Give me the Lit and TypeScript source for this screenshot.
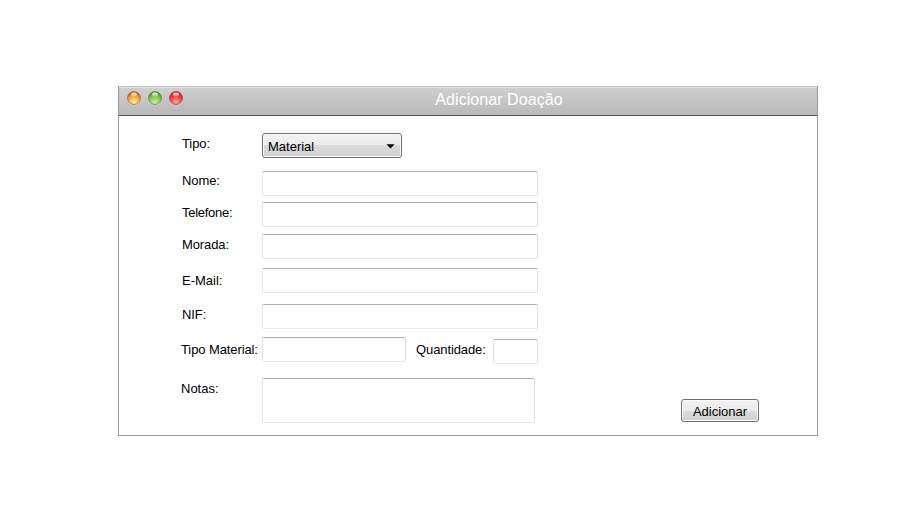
import { LitElement, html, css, svg } from "lit";
import { customElement, property } from "lit/decorators.js";

@customElement("window-light")
class WindowLight extends LitElement {
  @property() rim = "";
  @property() mid = "";
  @property() low = "";

  static styles = css`
    :host { display: block; width: 14px; height: 15px; }
    svg { display: block; }
  `;

  render() {
    return html`<svg width="14" height="15" viewBox="0 0 14 15">
      <defs>
        ${svg`<radialGradient id="body" cx="0.5" cy="0.82" r="0.8">
          <stop offset="0" stop-color=${this.low} />
          <stop offset="0.6" stop-color=${this.mid} />
          <stop offset="1" stop-color=${this.rim} />
        </radialGradient>
        <linearGradient id="shine" x1="0" y1="0" x2="0" y2="1">
          <stop offset="0" stop-color="#fff" stop-opacity="0.95" />
          <stop offset="1" stop-color="#fff" stop-opacity="0.25" />
        </linearGradient>`}
      </defs>
      <circle cx="7" cy="7.8" r="6.8" fill="#e4e4e4" opacity="0.7" />
      <circle cx="7" cy="7" r="6.5" fill="url(#body)" stroke=${this.rim} stroke-width="0.8" stroke-opacity="0.75" />
      <ellipse cx="7" cy="3.5" rx="3" ry="2" fill="url(#shine)" />
    </svg>`;
  }
}

@customElement("app-root")
class AppRoot extends LitElement {
  static styles = css`
    :host {
      display: block;
      box-sizing: border-box;
      height: 520px;
      padding: 86px 92px 84px 118px;
      background: #fff;
      color: #000;
      font: 13px/15px "Liberation Sans", Arial, sans-serif;
    }
    * { box-sizing: border-box; }
    .window {
      width: 700px;
      height: 350px;
      border: 1px solid #999;
      border-top: 0;
      display: flex;
      flex-direction: column;
    }
    .titlebar {
      height: 30px;
      flex: none;
      display: grid;
      grid-template-columns: 1fr auto 1fr;
      border-top: 1px solid #bcbcbc;
      border-bottom: 1px solid #505050;
      box-shadow: inset 0 1px #e2e2e2;
      background: linear-gradient(#d0d0d0, #b9b9b9);
    }
    .lights { display: flex; gap: 7px; padding: 4px 0 0 8px; }
    .title {
      color: #fff;
      font-size: 16px;
      line-height: 18px;
      letter-spacing: 0.06px;
      padding: 4px 0 0 62px;
      white-space: nowrap;
    }
    .content { flex: 1; display: flex; justify-content: space-between; }
    .form { padding: 17px 0 0 62px; }
    .row { display: flex; align-items: flex-start; height: 25px; }
    .label { width: 81px; flex: none; padding: 3px 0 0 1px; white-space: nowrap; letter-spacing: -0.1px; }
    .flush { padding-left: 0; }
    .nome { margin-top: 13px; }
    .nome .label { padding-top: 2px; }
    .telefone { margin-top: 6px; }
    .telefone .label { letter-spacing: -0.28px; }
    .morada { margin-top: 7px; }
    .email { margin-top: 9px; }
    .email .label { letter-spacing: 0; }
    .email .label, .material .label { padding-top: 5px; }
    .nif { margin-top: 11px; }
    .material { margin-top: 8px; }
    .notas { margin-top: 16px; height: 45px; }
    .notas .label { letter-spacing: 0; }
    input, textarea {
      display: block;
      margin: 0;
      padding: 2px 5px;
      height: 25px;
      border: 1px solid;
      border-color: #abadb3 #dbdfe6 #e3e9ef #e2e3ea;
      border-radius: 2px;
      background: #fff;
      outline: none;
      font: inherit;
      resize: none;
    }
    .wide { width: 276px; }
    .kind { width: 144px; }
    .amount { width: 45px; margin-top: 2px; }
    .notes { width: 273px; height: 45px; }
    .material .amount-label { width: 77px; margin-left: 10px; padding-left: 0; }
    .select, .button {
      display: flex;
      align-items: center;
      margin: 0;
      border: 1px solid #707070;
      border-radius: 3px;
      box-shadow: inset 0 0 0 1px #fafafa;
      background: linear-gradient(#f2f2f2, #ebebeb 50%, #dcdcdc 50%, #cfcfcf);
      color: #000;
      font: inherit;
    }
    .select { width: 140px; height: 25px; padding: 2px 6px 0 5px; justify-content: space-between; }
    .side { display: flex; align-items: flex-end; padding: 0 58px 13px 0; }
    .button { width: 78px; height: 23px; padding: 2px 0 0; justify-content: center; }
  `;

  private field(name: string, text: string) {
    return html`<div class="row ${name}">
      <label class="label" for=${name}>${text}</label>
      <input class="wide" id=${name} />
    </div>`;
  }

  render() {
    return html`<div class="window">
      <div class="titlebar">
        <div class="lights">
          <window-light rim="#a8482a" mid="#f0a040" low="#fff08c"></window-light>
          <window-light rim="#477a34" mid="#80bd50" low="#ccf490"></window-light>
          <window-light rim="#a4242a" mid="#f03c3c" low="#ffa49c"></window-light>
        </div>
        <div class="title">Adicionar Doação</div>
      </div>
      <div class="content">
        <div class="form">
          <div class="row">
            <span class="label">Tipo:</span>
            <div class="select" role="combobox">
              <span>Material</span>
              <svg width="9" height="5" viewBox="0 0 9 5"><path d="M0.5 0.2h8L4.5 4.4z" /></svg>
            </div>
          </div>
          ${this.field("nome", "Nome:")}
          ${this.field("telefone", "Telefone:")}
          ${this.field("morada", "Morada:")}
          ${this.field("email", "E-Mail:")}
          ${this.field("nif", "NIF:")}
          <div class="row material">
            <label class="label flush" for="kind">Tipo Material:</label>
            <input class="kind" id="kind" />
            <label class="label amount-label" for="amount">Quantidade:</label>
            <input class="amount" id="amount" />
          </div>
          <div class="row notas">
            <label class="label flush" for="notes">Notas:</label>
            <textarea class="notes" id="notes"></textarea>
          </div>
        </div>
        <div class="side"><button class="button">Adicionar</button></div>
      </div>
    </div>`;
  }
}
